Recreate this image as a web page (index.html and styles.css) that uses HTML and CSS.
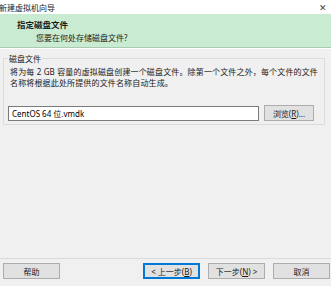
FILE: index.html
```html
<!DOCTYPE html>
<html>
  <head>
    <title>新建虚拟机向导</title>
    <link rel="stylesheet" href="styles.css">
  </head>
  <body>
    <div class="window">
      <div class="titlebar">
        <span class="title">新建虚拟机向导</span>
        <span class="close">✕</span>
      </div>
      <div class="header">
        <div class="header-title">指定磁盘文件</div>
        <div class="header-sub">您要在何处存储磁盘文件?</div>
      </div>
      <div class="content">
        <fieldset class="group">
          <legend>磁盘文件</legend>
          <p class="desc">将为每 2 GB 容量的虚拟磁盘创建一个磁盘文件。除第一个文件之外，每个文件的文件名称将根据此处所提供的文件名称自动生成。</p>
          <div class="file-row">
            <input type="text" class="file-input" value="CentOS 64 位.vmdk">
            <button type="button" class="btn browse">浏览(<u>R</u>)...</button>
          </div>
        </fieldset>
      </div>
      <div class="footer">
        <button type="button" class="btn">帮助</button>
        <div class="nav">
          <button type="button" class="btn focused">&lt; 上一步(<u>B</u>)</button>
          <button type="button" class="btn">下一步(<u>N</u>) &gt;</button>
          <button type="button" class="btn">取消</button>
        </div>
      </div>
    </div>
  </body>
</html>
```
FILE: styles.css
```css
body {
  margin: 0;
  padding: 0;
  font-family: "Noto Sans", "Noto Sans CJK SC", sans-serif;
  font-size: 8px;
  color: #1a1a1a;
  background-color: #f0f0f0;
}

.window {
  width: 331px;
  height: 286px;
  display: flex;
  flex-direction: column;
  background-color: #f0f0f0;
  overflow: hidden;
}

.titlebar {
  height: 14px;
  background-color: #ffffff;
  display: flex;
  justify-content: space-between;
  align-items: center;
  padding: 0 4px 0 0;
  margin-left: -1px;
}

.title {
  font-size: 8px;
  color: #222;
}

.close {
  font-size: 9px;
  color: #444;
}

.header {
  height: 34px;
  background-color: #c9ebd1;
  border-bottom: 1px solid #aacbb1;
  box-shadow: 0 1px 0 #ffffff;
  padding: 5px 0 0 17px;
  box-sizing: border-box;
}

.header-title {
  font-weight: bold;
  font-size: 8.5px;
  line-height: 12px;
}

.header-sub {
  padding-left: 19px;
  font-size: 8px;
  line-height: 13px;
}

.content {
  flex: 1;
  padding: 5px 6px 0 3px;
}

.group {
  margin: 0;
  padding: 0 10px 3px 4px;
  border: 1px solid #dcdcdc;
}

.group legend {
  padding: 0 1px;
  margin-left: 0;
  font-size: 8px;
}

.desc {
  margin: 2px 0 0 2px;
  line-height: 11px;
  letter-spacing: 0.15px;
  margin-right: -8px;
}

.file-row {
  display: flex;
  align-items: center;
  gap: 5px;
  margin-top: 17px;
}

.file-input {
  flex: 1;
  height: 15px;
  box-sizing: border-box;
  border: 1px solid #7a7a7a;
  background-color: #fff;
  font-family: "Noto Sans", "Noto Sans CJK SC", sans-serif;
  font-size: 8px;
  padding: 0 3px;
  margin: 0;
}

.btn {
  width: 57px;
  height: 16px;
  box-sizing: border-box;
  border: 1px solid #adadad;
  background-color: #e1e1e1;
  font-family: "Noto Sans", "Noto Sans CJK SC", sans-serif;
  font-size: 8px;
  color: #1a1a1a;
  padding: 0;
  margin: 0;
}

.btn.browse {
  width: 50px;
}

.btn.focused {
  border: 2px solid #0078d7;
}

.footer {
  border-top: 1px solid #dadada;
  height: 23px;
  display: flex;
  justify-content: space-between;
  align-items: flex-start;
  padding: 4px 1px 0 3px;
  margin-bottom: 0;
}

.nav {
  display: flex;
  gap: 8px;
}
```
